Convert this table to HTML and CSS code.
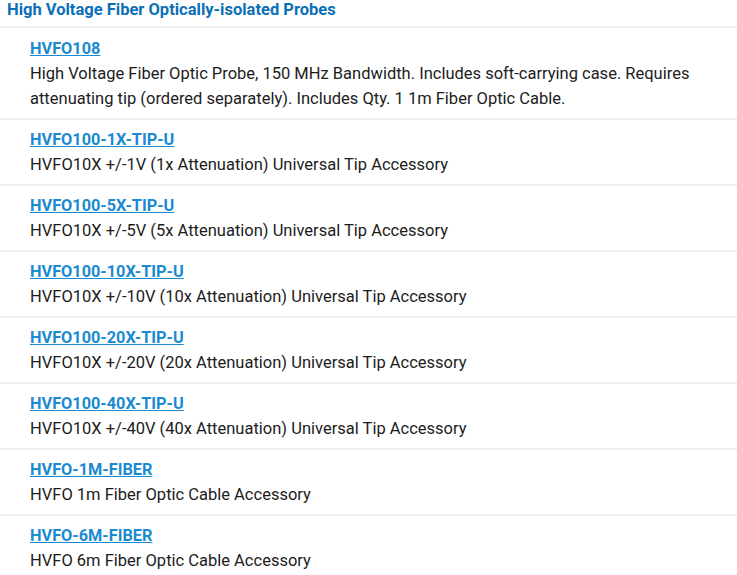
FILE: index.html
```html
<!DOCTYPE html>
<html>
<head>
<meta charset="utf-8">
<link rel="stylesheet" href="styles.css">
</head>
<body>
<div class="section">
  <h2 class="section-title">High Voltage Fiber Optically-isolated Probes</h2>
  <ul class="product-list">
    <li class="product">
      <a class="product-link" href="#">HVFO108</a>
      <p class="product-desc">High Voltage Fiber Optic Probe, 150 MHz Bandwidth. Includes soft-carrying case. Requires attenuating tip (ordered separately). Includes Qty. 1 1m Fiber Optic Cable.</p>
    </li>
    <li class="product">
      <a class="product-link" href="#">HVFO100-1X-TIP-U</a>
      <p class="product-desc">HVFO10X +/-1V (1x Attenuation) Universal Tip Accessory</p>
    </li>
    <li class="product">
      <a class="product-link" href="#">HVFO100-5X-TIP-U</a>
      <p class="product-desc">HVFO10X +/-5V (5x Attenuation) Universal Tip Accessory</p>
    </li>
    <li class="product">
      <a class="product-link" href="#">HVFO100-10X-TIP-U</a>
      <p class="product-desc">HVFO10X +/-10V (10x Attenuation) Universal Tip Accessory</p>
    </li>
    <li class="product">
      <a class="product-link" href="#">HVFO100-20X-TIP-U</a>
      <p class="product-desc">HVFO10X +/-20V (20x Attenuation) Universal Tip Accessory</p>
    </li>
    <li class="product">
      <a class="product-link" href="#">HVFO100-40X-TIP-U</a>
      <p class="product-desc">HVFO10X +/-40V (40x Attenuation) Universal Tip Accessory</p>
    </li>
    <li class="product">
      <a class="product-link" href="#">HVFO-1M-FIBER</a>
      <p class="product-desc">HVFO 1m Fiber Optic Cable Accessory</p>
    </li>
    <li class="product">
      <a class="product-link" href="#">HVFO-6M-FIBER</a>
      <p class="product-desc">HVFO 6m Fiber Optic Cable Accessory</p>
    </li>
  </ul>
</div>
</body>
</html>
```
FILE: styles.css
```css
html, body {
  margin: 0;
  padding: 0;
  background: #ffffff;
}
body {
  font-family: Roboto, "Liberation Sans", Arial, sans-serif;
  color: #1c1c1c;
}
.section {
  display: flex;
  flex-direction: column;
}
.section-title {
  margin: 0;
  padding: 1px 0 7px 7px;
  font-size: 16.5px;
  line-height: 18px;
  font-weight: 700;
  color: #0a70b8;
  border-bottom: 2px solid #eeeeee;
}
.product-list {
  list-style: none;
  margin: 0;
  padding: 0;
}
.product {
  display: flex;
  flex-direction: column;
  padding: 7px 0 7px 30px;
  border-bottom: 2px solid #eeeeee;
}
.product:first-child {
  padding-top: 8px;
}
.product-link {
  align-self: flex-start;
  font-size: 16.3px;
  line-height: 25px;
  font-weight: 700;
  color: #1a8ad1;
  text-decoration: underline;
}
.product-desc {
  margin: 0;
  font-size: 16.5px;
  line-height: 25px;
  color: #1c1c1c;
  padding-right: 20px;
}
```
